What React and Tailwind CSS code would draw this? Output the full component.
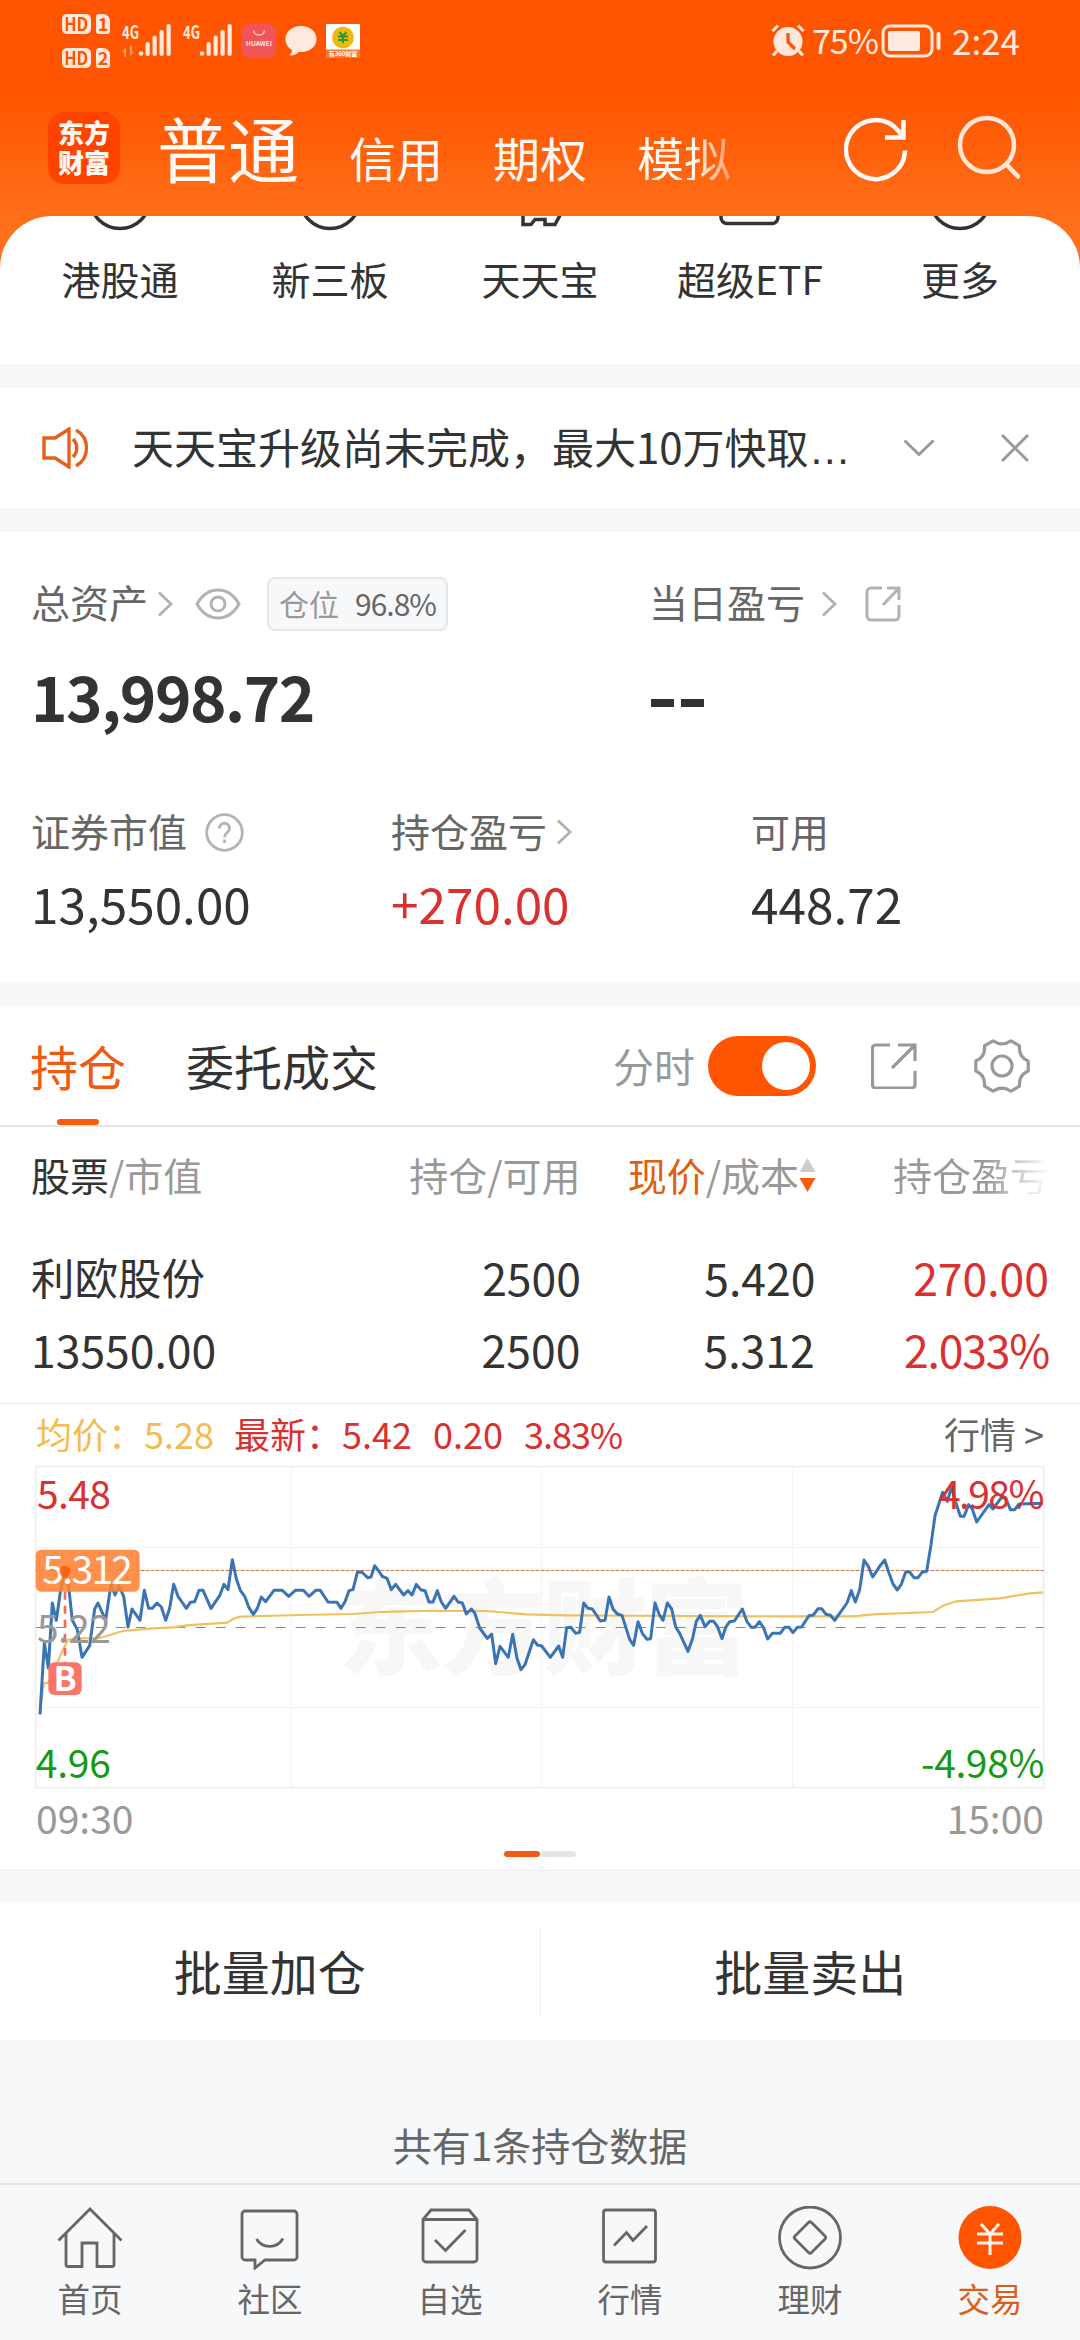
import React from 'react';

const PRICE_LINE =
  '121,914 134,700 146,775 158,580 170,632 183,540 196,485 208,540 218,632 233,660 247,743 270,708 285,598 295,580 318,632 334,524 346,556 358,528 372,560 385,652 397,598 421,632 434,542 447,596 458,596 472,580 485,592 498,632 510,596 522,524 535,560 560,596 572,578 585,576 598,542 610,542 634,596 660,558 673,524 685,540 698,450 710,508 722,542 735,560 748,594 761,614 773,596 785,562 798,576 823,542 848,542 867,560 887,542 911,542 928,560 948,542 962,542 985,577 1012,578 1024,596 1036,576 1048,543 1060,540 1073,488 1086,487 1104,504 1114,502 1125,468 1138,485 1148,500 1162,506 1175,540 1188,524 1212,556 1225,543 1237,556 1250,524 1263,540 1276,543 1288,577 1300,577 1313,543 1325,577 1338,596 1363,560 1375,577 1388,580 1400,613 1415,598 1425,610 1440,655 1463,686 1476,673 1488,762 1501,710 1526,743 1539,674 1552,746 1564,780 1576,765 1601,690 1613,706 1626,709 1652,743 1677,709 1689,743 1701,654 1714,653 1728,671 1740,668 1752,580 1765,596 1778,598 1802,634 1816,632 1828,562 1840,598 1853,613 1867,617 1890,689 1902,707 1915,636 1928,671 1942,689 1953,687 1966,580 1978,613 1990,632 2003,580 2016,598 2028,652 2040,671 2065,725 2078,689 2090,635 2102,617 2116,651 2130,635 2142,635 2153,650 2167,687 2178,653 2190,636 2204,634 2228,598 2242,636 2255,653 2266,653 2279,636 2291,653 2304,688 2318,671 2342,671 2355,653 2368,653 2380,669 2393,653 2406,652 2428,618 2441,616 2455,597 2466,597 2479,614 2492,617 2505,632 2542,580 2555,543 2567,577 2580,540 2593,451 2606,470 2619,502 2642,467 2655,451 2668,490 2680,523 2693,541 2705,524 2718,487 2730,487 2743,504 2755,504 2767,488 2781,485 2794,405 2806,318 2829,248 2843,275 2856,232 2872,290 2882,320 2893,320 2907,285 2918,298 2931,337 2968,285 2980,298 3005,264 3018,264 3032,300 3045,300 3058,283 3130,281';

const AVG_LINE =
  '121,900 133,820 145,820 165,780 183,735 205,690 240,686 300,685 370,664 450,657 520,653 560,647 683,639 700,628 720,621 900,616 1060,613 1140,607 1190,606 1260,604 1460,604 1580,614 1700,617 2060,619 2320,620 2560,620 2620,614 2800,607 2830,588 2870,575 3000,566 3090,551 3130,548';

const Signal = ({ data }) => (
  <svg width="51" height="34" viewBox="0 0 51 34" className="shrink-0 overflow-visible" fill="#ffe9de">
    <text x="0" y="15" fontSize="18" fontWeight="700" textLength="17" lengthAdjust="spacingAndGlyphs">4G</text>
    {data && <path d="M0 28l4-5v10H2v-5zM8 22v10l4-4H10v-6zM12 27h3" fill="#ff9d70" />}
    <circle cx="19" cy="29.5" r="2.3" />
    <rect x="23.5" y="18" width="4.2" height="14" rx="2" />
    <rect x="30.5" y="11.5" width="4.2" height="20.5" rx="2" />
    <rect x="37.5" y="6" width="4.2" height="26" rx="2" />
    <rect x="44.5" y="0" width="4.2" height="32" rx="2" />
  </svg>
);

const HdBadge = ({ n }) => (
  <div className="flex gap-[5px] text-[#ff5500] font-bold text-[18px] leading-[20px]">
    <div className="w-[29px] h-[20px] rounded-[5px] bg-[#ffe9de] flex items-center justify-center">
      <span className="-mt-0.5 scale-x-90">HD</span>
    </div>
    <div className="w-[14px] h-[20px] rounded-[3px] rounded-tr-[7px] bg-[#ffe9de] flex items-center justify-center">
      <span className="-mt-0.5">{n}</span>
    </div>
  </div>
);

const StatusBar = () => (
  <div className="h-[80px] pl-[62px] pr-[60px] flex items-start justify-between text-[#ffe9de]">
    <div className="flex items-start">
      <div className="flex flex-col gap-[14px] mt-[14px] mr-[12px]">
        <HdBadge n="1" />
        <HdBadge n="2" />
      </div>
      <div className="flex items-start mt-[24px]">
        <Signal data />
        <div className="ml-[10px]"><Signal /></div>
        <div className="ml-[8px] w-[34px] h-[34px] rounded-[8px] bg-[#f0555a] flex flex-col items-center">
          <svg width="34" height="14" viewBox="0 0 34 14" fill="none" stroke="#ffd0cc" strokeWidth="1.4">
            <path d="M11.5 6.5c1 6 10 6 11 0" />
          </svg>
          <span className="text-[6.5px] leading-[11px] font-bold">HUAWEI</span>
        </div>
        <svg width="34" height="34" viewBox="0 0 34 34" className="ml-[8px]" fill="#ffe9de">
          <path d="M17 2C8 2 1.5 7.5 1.5 15c0 5 2.500 8.500 6.500 11 0 2-1 4-2.500 5.500 4 .5 7-1 9-3.500h2.500c9 0 15.500-5.500 15.500-13S26 2 17 2z" />
        </svg>
        <svg width="34" height="34" viewBox="0 0 34 34" className="ml-[8px]">
          <rect width="34" height="34" fill="#fff" />
          <circle cx="17" cy="13.5" r="10.8" fill="#f0b90f" />
          <path d="M13.500 8l3.500 4 3.500-4M12 12.500h10M12 16h10M17 12v7" stroke="#2b9a2f" strokeWidth="2" fill="none" />
          <rect y="25.5" width="34" height="8.5" fill="#f47b30" />
          <text x="17" y="32" fontSize="6" fontWeight="700" fill="#fff" textAnchor="middle">有360财富</text>
        </svg>
      </div>
    </div>
    <div className="flex items-center mt-[23px] text-[34px] leading-[36px]">
      <svg width="34" height="36" viewBox="0 0 34 36" className="mr-[7px]" fill="#ffe9de">
        <circle cx="17" cy="18.5" r="14.5" />
        <path d="M1.500 8L7 2.500M32.500 8L27 2.500M6 28l-4 4.500M28 28l4 4.500" stroke="#ffe9de" strokeWidth="3" />
        <path d="M17 10v9l7 7" stroke="#ff5500" strokeWidth="3.2" fill="none" />
      </svg>
      <span className="w-[69px] -mt-[3px] tracking-[-1px]">75%</span>
      <svg width="62" height="34" viewBox="0 0 62 34" fill="none">
        <rect x="2" y="2" width="49" height="30" rx="7" stroke="#ffe9de" strokeWidth="3" />
        <rect x="7" y="7" width="32" height="20" rx="2" fill="#ffe9de" />
        <rect x="55.5" y="8" width="4" height="18" rx="2" fill="#ffe9de" />
      </svg>
      <span className="ml-[9px] w-[68px] -mt-[3px] text-[35px]">2:24</span>
    </div>
  </div>
);

const Header = () => (
  <header className="h-[216px] shrink-0">
    <StatusBar />
    <div className="flex items-start pl-[48px] text-[#fffaf5] leading-none whitespace-nowrap">
      <div className="w-[72px] h-[72px] mt-[32px] rounded-[16px] bg-[#ff4400] text-[26px] leading-[30px] font-black flex items-center justify-center">
        <span className="-mt-[2px]">东方<br />财富</span>
      </div>
      <span className="mt-[31px] ml-[37px] text-[71px]">普通</span>
      <span className="mt-[53px] ml-[50px] text-[47px]">信用</span>
      <span className="mt-[53px] ml-[50px] text-[47px]">期权</span>
      <span className="mt-[53px] ml-[50px] text-[47px] bg-gradient-to-r from-[#fffaf5] from-60% to-[#ff9a66] bg-clip-text text-transparent">模拟</span>
      <svg width="64" height="68" viewBox="0 0 64 68" className="mt-[35px] ml-[113px]" fill="none" stroke="#fffaf5" strokeWidth="4.5">
        <path d="M61 35.500A29.500 29.500 0 1 1 54 15.500L59 22" />
        <path d="M59.500 5v17.500H41" />
      </svg>
      <svg width="64" height="68" viewBox="0 0 64 68" className="mt-[35px] ml-[48px]" fill="none" stroke="#ffe6d6" strokeWidth="4.5">
        <circle cx="31" cy="30" r="27" />
        <path d="M50 49l13.500 14" />
      </svg>
    </div>
  </header>
);

const shortcuts = [
  { label: '港股通', icon: <circle cx="40" cy="-17.5" r="30" /> },
  { label: '新三板', icon: <circle cx="40" cy="-17.5" r="30" /> },
  { label: '天天宝', icon: <path d="M23 -4v12.500h8l4-5h10v5h10l6-11" /> },
  { label: '超级ETF', icon: <rect x="11" y="-50" width="57" height="57.5" rx="6" /> },
  { label: '更多', icon: <circle cx="40" cy="-17.5" r="30" /> },
];

const Shortcuts = () => (
  <section className="h-[148px] bg-white rounded-t-[52px] px-[15px] flex shrink-0">
    {shortcuts.map((s) => (
      <div key={s.label} className="flex-1 flex flex-col items-center">
        <svg width="80" height="16" viewBox="0 0 80 16" fill="none" stroke="#333" strokeWidth="3.5">
          {s.icon}
        </svg>
        <span className="mt-[27px] text-[39px] leading-none text-[#333]">{s.label}</span>
      </div>
    ))}
  </section>
);

const Arrow = ({ className }) => (
  <svg width="16" height="26" viewBox="0 0 16 26" className={className} fill="none" stroke="#b0b0b0" strokeWidth="2.8">
    <path d="M2 1.500L14 13 2 24.500" />
  </svg>
);

const Notice = () => (
  <section className="h-[120px] mt-6 bg-white flex items-center shrink-0">
    <svg width="48" height="42" viewBox="0 0 48 42" className="ml-[42px]" fill="none" stroke="#e8601c" strokeWidth="3.4">
      <path d="M2 11h11L27 2v38L13 31H2zM31 12c5 5 5 13 0 18M34 3c14 8 14 28 0 36" />
    </svg>
    <span className="ml-[42px] w-[720px] text-[42px] leading-none text-[#333] whitespace-nowrap">
      天天宝升级尚未完成，最大10万快取<span className="font-['Liberation_Sans'] tracking-[1px]">…</span>
    </span>
    <svg width="32" height="20" viewBox="0 0 32 20" className="ml-[51px]" fill="none" stroke="#999" strokeWidth="3">
      <path d="M1.500 2.500L16 16.500 30.500 2.500" />
    </svg>
    <svg width="28" height="28" viewBox="0 0 28 28" className="ml-[66px]" fill="none" stroke="#999" strokeWidth="3">
      <path d="M1 1l26 26M27 1L1 27" />
    </svg>
  </section>
);

const Assets = () => (
  <section className="h-[450px] mt-6 bg-white px-[31px] flex flex-col shrink-0 text-[#666] text-[39px] leading-none whitespace-nowrap">
    <div className="flex h-[54px] mt-[45px]">
      <div className="w-[617px] flex items-center">
        <span className="-mt-[5px]">总资产</span>
        <Arrow className="ml-[9px]" />
        <svg width="46" height="32" viewBox="0 0 46 32" className="ml-[22px]" fill="none" stroke="#b3b3b3" strokeWidth="3">
          <path d="M2 16C7 7 14 2 23 2s16 5 21 14c-5 9-12 14-21 14S7 25 2 16z" />
          <circle cx="23" cy="16" r="7" />
        </svg>
        <div className="ml-[26px] w-[181px] h-[54px] rounded-lg border-2 border-[#e6e7ea] bg-[#f7f8fa] text-[30px] flex items-center justify-center gap-[16px]">
          <span className="text-[#999] -mt-[3px]">仓位</span>
          <span className="-mt-[3px] tracking-[-1px]">96.8%</span>
        </div>
      </div>
      <div className="flex items-center">
        <span className="-mt-[5px] ml-px">当日盈亏</span>
        <Arrow className="ml-[16px]" />
        <svg width="36" height="36" viewBox="0 0 36 36" className="ml-[28px]" fill="none" stroke="#b3b3b3" strokeWidth="3">
          <path d="M17 2H6a4 4 0 0 0-4 4v24a4 4 0 0 0 4 4h24a4 4 0 0 0 4-4V19M22 2h12v12M34 2L18 19" />
        </svg>
      </div>
    </div>
    <div className="flex mt-[34px] h-[60px] items-center text-[#333] font-bold text-[62px]">
      <span className="w-[617px] tracking-[-1.5px]">13,998.72</span>
      <svg width="56" height="10" viewBox="0 0 56 10" fill="#333" className="mt-[15px] ml-[3px]">
        <path d="M0 1h23v8H0zM30 1h23v8H30z" />
      </svg>
    </div>
    <div className="flex mt-[86px] h-[42px]">
      <div className="w-[360px] flex items-center">
        <span className="-mt-[3px]">证券市值</span>
        <svg width="39" height="39" viewBox="0 0 39 39" className="ml-[18px]" fill="none" stroke="#b3b3b3" strokeWidth="2.8">
          <circle cx="19.5" cy="19.5" r="17.8" />
          <path d="M14.500 15.500c0-7 10-7 10 0 0 4-5 4-5 9M19.500 26.500v3.500" />
        </svg>
      </div>
      <div className="w-[360px] flex items-center">
        <span className="-mt-[3px]">持仓盈亏</span>
        <Arrow className="ml-[9px]" />
      </div>
      <div className="flex items-center"><span className="-mt-[3px]">可用</span></div>
    </div>
    <div className="flex mt-[25px] text-[49.5px] text-[#333]">
      <span className="w-[360px]">13,550.00</span>
      <span className="w-[360px] text-[#d93030]">+270.00</span>
      <span>448.72</span>
    </div>
  </section>
);

const Tabs = () => (
  <div className="h-[121px] border-b-2 border-[#e6e6e6] flex items-center text-[48px] leading-none whitespace-nowrap shrink-0">
    <div className="ml-[30px] h-full flex flex-col items-center text-[#f05a10]">
      <span className="mt-[35px]">持仓</span>
      <div className="w-[42px] h-[6px] mt-[30px] rounded-full bg-[#fa5a0c]" />
    </div>
    <span className="ml-[60px] -mt-[2px] text-[#333]">委托成交</span>
    <span className="ml-[235px] text-[41px] text-[#999]">分时</span>
    <div className="ml-[13px] w-[108px] h-[60px] rounded-full bg-[#ff5500] p-[6px] flex justify-end">
      <div className="w-[48px] h-[48px] rounded-full bg-white" />
    </div>
    <svg width="46" height="46" viewBox="0 0 46 46" className="ml-[55px]" fill="none" stroke="#999" strokeWidth="3.2">
      <path d="M19 2H4.500a3 3 0 0 0-3 3v37a3 3 0 0 0 3 3H41a3 3 0 0 0 3-3V28M27 2h17v16M43 3L21 25" />
    </svg>
    <svg width="56" height="54" viewBox="0 0 56 54" className="ml-[57px]" fill="none" stroke="#999" strokeWidth="3.2">
      <path d="M19 1.800Q28 8 37 1.800L45.500 6.800Q44.500 18 54.200 22V32Q44.500 36 45.500 47.200L37 52.200Q28 46 19 52.200L10.500 47.200Q11.500 36 1.800 32V22Q11.500 18 10.500 6.800Z" strokeLinejoin="round" />
      <circle cx="28" cy="27" r="10" />
    </svg>
  </div>
);

const Holdings = () => (
  <div className="h-[276px] shrink-0 leading-[44px] whitespace-nowrap text-[#333] text-[44.5px] px-[31px]">
    <div className="flex text-[39px] leading-[39px] text-[#999] pt-[28px]">
      <span className="w-[240px]"><span className="text-[#333]">股票</span>/市值</span>
      <span className="w-[311px] text-right">持仓/可用</span>
      <span className="w-[236px] flex justify-end items-center">
        <span><span className="text-[#e06010]">现价</span>/成本</span>
        <svg width="17" height="36" viewBox="0 0 17 36">
          <path d="M8.500 1l8 14H.5z" fill="#ccc" />
          <path d="M.5 21h16l-8 14z" fill="#fa5a0c" />
        </svg>
      </span>
      <span className="ml-[77px] bg-gradient-to-r from-[#999] from-60% to-white bg-clip-text text-transparent">持仓盈亏</span>
    </div>
    <div className="flex mt-[61px]">
      <span className="w-[240px] text-[43.5px]">利欧股份</span>
      <span className="w-[311px] text-right">2500</span>
      <span className="w-[235px] text-right">5.420</span>
      <span className="w-[234px] text-right text-[#d93030]">270.00</span>
    </div>
    <div className="flex mt-[28px]">
      <span className="w-[240px]">13550.00</span>
      <span className="w-[311px] text-right">2500</span>
      <span className="w-[235px] text-right">5.312</span>
      <span className="w-[235px] text-right text-[#d93030] tracking-[-1.2px]">2.033%</span>
    </div>
  </div>
);

const Chart = () => (
  <div className="h-[468px] border-t border-[#e8e8e8] border-b border-b-[#eceef0] px-[36px] flex flex-col shrink-0 text-[36px] leading-none whitespace-nowrap">
    <div className="flex pt-[11px] h-[62px] shrink-0 text-[#d93030]">
      <span className="text-[#f3bc50] w-[198px]">均价：5.28</span>
      <span className="w-[199px]">最新：5.42</span>
      <span className="w-[91px]">0.20</span>
      <span className="tracking-[-1px]">3.83%</span>
      <span className="ml-auto text-[#666]">行情 &gt;</span>
    </div>
    <svg width="1010" height="323" viewBox="106 169 3030 969" className="-ml-px shrink-0 overflow-visible" fill="none">
      <text x="1018" y="772" fontSize="312" fontWeight="900" fill="#f7f7f7" textLength="1230">东方财富</text>
      <rect x="108" y="171" width="3024" height="963" stroke="#eee" strokeWidth="5" />
      <path d="M108 413.500H3132M108 893.500H3132M874 171V1134M1626 171V1134M2379 171V1134" stroke="#e6e6e6" strokeWidth="3" strokeDasharray="4 4" />
      <path d="M108 653.500H3132" stroke="#888" strokeWidth="3" strokeDasharray="30 30" />
      <path d="M108 482.500H3132" stroke="#cc7848" strokeWidth="3.500" strokeDasharray="11 4" />
      <polyline points={AVG_LINE} stroke="#f0c060" strokeWidth="6.500" />
      <polyline points={PRICE_LINE} stroke="#3a74b4" strokeWidth="9" strokeLinejoin="round" />
      <g fontSize="117">
        <rect x="108" y="420" width="312" height="126" rx="16" fill="#ff8233" fillOpacity=".88" />
        <text x="128" y="522" fill="#fff" textLength="272" lengthAdjust="spacing">5.312</text>
        <circle cx="196" cy="485" r="17" fill="#fa5a0c" fillOpacity=".8" />
        <path d="M196 546V760" stroke="#ef6a60" strokeWidth="8" strokeDasharray="24 18" />
        <text x="112" y="298" fill="#d93030" textLength="222">5.48</text>
        <text x="112" y="699" fill="#999" textLength="222">5.22</text>
        <text x="108" y="1104" fill="#169a16" textLength="226">4.96</text>
        <text x="2972" y="298" fill="#d93030" textAnchor="end" textLength="316" dx="162">4.98%</text>
        <text x="2972" y="1104" fill="#169a16" textAnchor="end" textLength="370" dx="162">-4.98%</text>
        <rect x="146" y="758" width="100" height="98" rx="18" fill="#fa7468" />
        <text x="196" y="845" fill="#fff" fontWeight="700" fontSize="102" textAnchor="middle">B</text>
      </g>
    </svg>
    <div className="flex justify-between mt-[9px] text-[39px] text-[#999]">
      <span>09:30</span>
      <span>15:00</span>
    </div>
    <div className="flex self-center mt-[14px]">
      <div className="w-[36px] h-[6px] rounded-full bg-[#f55a14]" />
      <div className="w-[36px] h-[6px] rounded-full bg-[#e5e5e5]" />
    </div>
  </div>
);

const navItems = [
  {
    label: '首页',
    icon: <path d="M1.500 34.500L33 3l31.500 31.500M9 27v31.500a2 2 0 0 0 2 2h14V37h15v23.500h15a2 2 0 0 0 2-2V27" />,
  },
  {
    label: '社区',
    icon: <path d="M8 5h49a3 3 0 0 1 3 3v43a3 3 0 0 1-3 3H28l-10 8V54H8a3 3 0 0 1-3-3V8a3 3 0 0 1 3-3zM19.500 33c6 10 20.500 10 26.500-.5" />,
  },
  {
    label: '自选',
    icon: <path d="M6 13.500l8-9.500h38l8 9.500V53a3 3 0 0 1-3 3H9a3 3 0 0 1-3-3zH60M18 34l10.500 10.500L48.500 24" />,
  },
  {
    label: '行情',
    icon: <path d="M9 4h47a2.500 2.500 0 0 1 2.500 2.500v47A2.500 2.500 0 0 1 56 56H9a2.500 2.500 0 0 1-2.500-2.500v-47A2.500 2.500 0 0 1 9 4zM17 39.500l12.500-13 6.500 8L50 20" />,
  },
  {
    label: '理财',
    icon: (
      <>
        <circle cx="33" cy="31.5" r="30.5" />
        <path d="M31.500 16.500q1.500-1.500 3 0L48 30q1.500 1.500 0 3L34.500 46.500q-1.500 1.500-3 0L18 33q-1.500-1.500 0-3z" />
      </>
    ),
  },
  {
    label: '交易',
    active: true,
    icon: (
      <>
        <circle cx="33" cy="31.5" r="31.5" fill="#ff5500" stroke="none" />
        <path d="M24 18l9 10 9-10M20 28h26M20 37h26M33 28v21" stroke="#fff5ee" strokeWidth="3" />
      </>
    ),
  },
];

const BottomNav = () => (
  <nav className="h-[157px] border-t-2 border-[#e6e6e6] bg-[#f7f8fa] flex shrink-0">
    {navItems.map((item) => (
      <div key={item.label} className="flex-1 flex flex-col items-center pt-[21px]">
        <svg width="66" height="64" viewBox="0 0 66 64" fill="none" stroke="#666" strokeWidth="2.8">
          {item.icon}
        </svg>
        <span className={`mt-[12px] text-[32.5px] leading-none ${item.active ? 'text-[#d96018]' : 'text-[#666]'}`}>{item.label}</span>
      </div>
    ))}
  </nav>
);

export default function App() {
  return (
    <div className="w-[1080px] h-[2340px] overflow-hidden flex flex-col bg-[#f7f8fa] font-['Noto_Sans_CJK_SC',sans-serif]">
      <div className="bg-[linear-gradient(180deg,#ff5500_0px,#ff5500_95px,#ff6f1a_216px,#ff7320_270px)] flex flex-col shrink-0">
        <Header />
        <Shortcuts />
      </div>
      <Notice />
      <Assets />
      <section className="mt-6 bg-white flex flex-col shrink-0">
        <Tabs />
        <Holdings />
        <Chart />
      </section>
      <section className="mt-[31px] h-[138px] bg-white flex items-center shrink-0 text-[48px] leading-none text-[#333]">
        <span className="flex-1 text-center -mt-[3px]">批量加仓</span>
        <div className="w-px h-[90px] bg-[#f2f2f2]" />
        <span className="flex-1 text-center -mt-[3px]">批量卖出</span>
      </section>
      <div className="flex-1 flex justify-center pt-[85px] text-[39px] leading-none text-[#666]">
        <span>共有1条持仓数据</span>
      </div>
      <BottomNav />
    </div>
  );
}
